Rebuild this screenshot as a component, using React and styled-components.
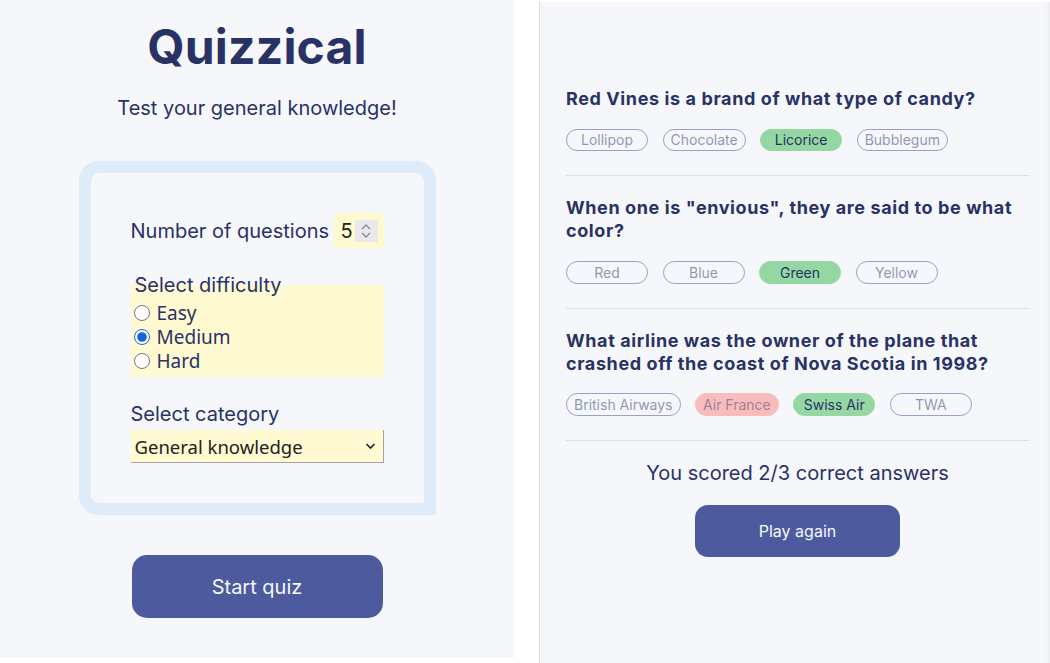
import React from 'react';
import styled, { createGlobalStyle } from 'styled-components';

const GlobalStyle = createGlobalStyle`
	* {
		box-sizing: border-box;
	}
	body {
		margin: 0;
		background: #ffffff;
		font-family: Inter, "Noto Sans", sans-serif;
		color: #293264;
	}
`;

const Page = styled.div`
	display: flex;
	align-items: flex-start;
	gap: 25px;
	height: 663px;
	overflow: hidden;
`;

const StartPanel = styled.section`
	width: 514px;
	height: 658px;
	background: #f5f7fb;
	display: flex;
	flex-direction: column;
	align-items: center;
	padding-top: 18px;
`;

const Title = styled.h1`
	margin: 0;
	font-size: 48px;
	line-height: 58px;
	font-weight: 700;
	letter-spacing: 0.2px;
	color: #293264;
`;

const Subtitle = styled.p`
	margin: 20px 0 0;
	font-size: 20px;
	line-height: 24px;
	color: #293264;
`;

const FormCard = styled.form`
	margin-top: 41px;
	width: 357px;
	border: 12px solid #deebf8;
	border-radius: 20px 20px 0 20px;
	background: #f5f7fb;
	padding: 40px;
	display: flex;
	flex-direction: column;
	gap: 25px;
`;

const NumberRow = styled.label`
	display: flex;
	align-items: center;
	justify-content: space-between;
	height: 35px;
	font-size: 20px;
`;

const NumberBox = styled.div`
	width: 50px;
	height: 35px;
	background: #fff9d0;
	display: flex;
	align-items: center;
	justify-content: space-between;
	padding: 0 6px 0 7px;
	font-size: 20px;
	color: #222;
`;

const Spinner = styled.span`
	flex: none;
	width: 23px;
	height: 22px;
	background: #e9e9ed;
	display: flex;
	align-items: center;
	justify-content: center;
`;

const DifficultyGroup = styled.div`
	background: linear-gradient(to bottom, transparent 12px, #fffad1 12px);
	padding-bottom: 4px;
`;

const GroupTitle = styled.div`
	padding-left: 4px;
	font-size: 20px;
	line-height: 24px;
`;

const RadioList = styled.div`
	margin-top: 4px;
	padding-left: 3px;
	display: flex;
	flex-direction: column;
`;

const RadioRow = styled.label`
	display: flex;
	align-items: center;
	height: 24px;
	font-family: "Noto Sans", Inter, sans-serif;
	font-size: 19px;
	line-height: 24px;
	color: #293264;

	input {
		width: 16px;
		height: 16px;
		margin: 0 7px 0 0;
		accent-color: #1863d6;
	}
`;

const CategoryGroup = styled.label`
	display: flex;
	flex-direction: column;
	gap: 4px;
	font-size: 20px;
	line-height: 24px;
`;

const SelectWrap = styled.div`
	position: relative;
`;

const Select = styled.select`
	appearance: none;
	width: 100%;
	height: 33px;
	background: #fffad1;
	border: none;
	border-right: 1px solid #a3a3a3;
	border-bottom: 1px solid #a3a3a3;
	border-radius: 0;
	padding: 0 4px;
	font-family: "Noto Sans", Inter, sans-serif;
	font-size: 18.5px;
	color: #222;
`;

const Chevron = styled.svg`
	position: absolute;
	right: 8px;
	top: 12px;
	pointer-events: none;
`;

const PrimaryButton = styled.button`
	border: none;
	background: #4d5b9e;
	color: #f5f7fb;
	font-family: Inter, sans-serif;
	cursor: pointer;
`;

const StartButton = styled(PrimaryButton)`
	margin-top: 40px;
	width: 251px;
	height: 63px;
	border-radius: 15px;
	font-size: 20px;
`;

const ResultsPanel = styled.section`
	flex: 1;
	align-self: stretch;
	margin-top: 2px;
	border-left: 1px solid #dcdce2;
	background: #f5f7fb;
	padding: 85px 21px 0 26px;
	box-shadow: inset -6px 0 6px -5px rgba(0, 0, 0, 0.06);
`;

const QuestionBlock = styled.div`
	padding: 20px 0 24px;
	border-bottom: 1px solid #dbdef0;

	&:first-child {
		padding-top: 0;
	}
`;

const Question = styled.h2`
	margin: 0 0 18.5px;
	font-size: 18px;
	line-height: 23px;
	font-weight: 700;
	letter-spacing: 0.6px;
	color: #293264;
`;

const Answers = styled.div`
	display: flex;
	flex-wrap: wrap;
	gap: 14.5px;
`;

const pillStyles = {
	idle: `
		border-color: rgba(77, 91, 158, 0.55);
		color: rgba(41, 50, 100, 0.5);
		background: transparent;
	`,
	correct: `
		border-color: #94d7a2;
		color: #293264;
		background: #94d7a2;
	`,
	wrong: `
		border-color: #f8bcbc;
		color: rgba(41, 50, 100, 0.45);
		background: #f8bcbc;
	`,
};

const Pill = styled.span`
	min-width: 82px;
	height: 22.8px;
	padding: 0 7px;
	border: 1px solid;
	border-radius: 12px;
	display: inline-flex;
	align-items: center;
	justify-content: center;
	font-size: 14px;
	${({ status }) => pillStyles[status]}
`;

const Score = styled.p`
	margin: 20px 0 0;
	text-align: center;
	font-size: 20px;
	line-height: 24px;
	color: #293264;
`;

const PlayButton = styled(PrimaryButton)`
	display: block;
	margin: 20px auto 0;
	width: 205px;
	height: 52px;
	border-radius: 13px;
	font-size: 16px;
`;

const questions = [
	{
		text: 'Red Vines is a brand of what type of candy?',
		answers: [
			['Lollipop', 'idle'],
			['Chocolate', 'idle'],
			['Licorice', 'correct'],
			['Bubblegum', 'idle'],
		],
	},
	{
		text: 'When one is "envious", they are said to be what color?',
		answers: [
			['Red', 'idle'],
			['Blue', 'idle'],
			['Green', 'correct'],
			['Yellow', 'idle'],
		],
	},
	{
		text: 'What airline was the owner of the plane that crashed off the coast of Nova Scotia in 1998?',
		answers: [
			['British Airways', 'idle'],
			['Air France', 'wrong'],
			['Swiss Air', 'correct'],
			['TWA', 'idle'],
		],
	},
];

const App = () => (
	<>
		<GlobalStyle />
		<Page>
			<StartPanel>
				<Title>Quizzical</Title>
				<Subtitle>Test your general knowledge!</Subtitle>
				<FormCard onSubmit={e => e.preventDefault()}>
					<NumberRow>
						<span>Number of questions</span>
						<NumberBox>
							<span>5</span>
							<Spinner>
								<svg width="12" height="18" viewBox="0 0 12 18" fill="none" stroke="#8a8a8e" strokeWidth="1.4">
									<path d="M2 7 L6 3 L10 7" />
									<path d="M2 11 L6 15 L10 11" />
								</svg>
							</Spinner>
						</NumberBox>
					</NumberRow>
					<DifficultyGroup>
						<GroupTitle>Select difficulty</GroupTitle>
						<RadioList>
							<RadioRow>
								<input type="radio" name="difficulty" value="easy" />
								Easy
							</RadioRow>
							<RadioRow>
								<input type="radio" name="difficulty" value="medium" defaultChecked />
								Medium
							</RadioRow>
							<RadioRow>
								<input type="radio" name="difficulty" value="hard" />
								Hard
							</RadioRow>
						</RadioList>
					</DifficultyGroup>
					<CategoryGroup>
						<span>Select category</span>
						<SelectWrap>
							<Select defaultValue="general">
								<option value="general">General knowledge</option>
								<option value="history">History</option>
								<option value="science">Science</option>
							</Select>
							<Chevron width="11" height="8" viewBox="0 0 11 8" fill="none" stroke="#222" strokeWidth="1.6">
								<path d="M1.5 2 L5.5 6 L9.5 2" />
							</Chevron>
						</SelectWrap>
					</CategoryGroup>
				</FormCard>
				<StartButton>Start quiz</StartButton>
			</StartPanel>
			<ResultsPanel>
				{questions.map(q => (
					<QuestionBlock key={q.text}>
						<Question>{q.text}</Question>
						<Answers>
							{q.answers.map(([label, status]) => (
								<Pill key={label} status={status}>
									{label}
								</Pill>
							))}
						</Answers>
					</QuestionBlock>
				))}
				<Score>You scored 2/3 correct answers</Score>
				<PlayButton>Play again</PlayButton>
			</ResultsPanel>
		</Page>
	</>
);

export default App;
